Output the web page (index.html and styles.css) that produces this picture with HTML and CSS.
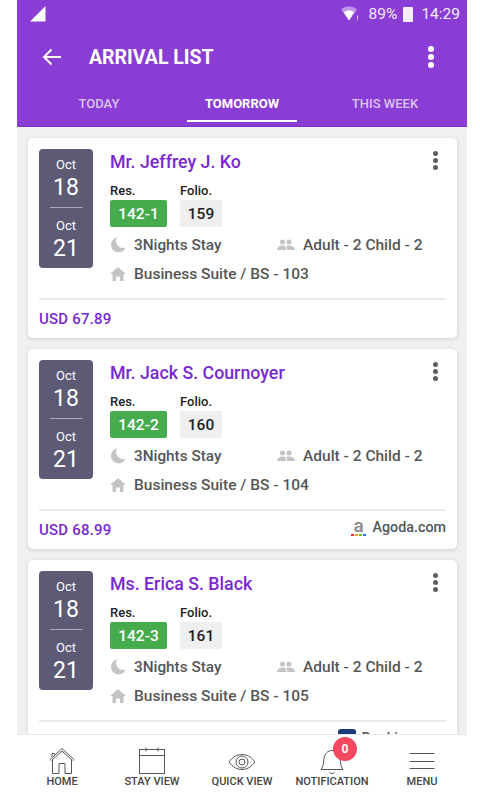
FILE: index.html
```html
<!DOCTYPE html>
<html lang="en">
<head>
<meta charset="utf-8">
<title>Arrival List</title>
<link rel="stylesheet" href="styles.css">
</head>
<body>
<div class="phone">
  <header class="appbar">
    <div class="status">
      <svg class="signal" width="16" height="16" viewBox="0 0 16 16"><path d="M0 15.500L15.500 0V15.500Z" fill="#fff"/></svg>
      <div class="status-right">
        <svg class="wifi" width="18" height="16" viewBox="0 0 18 16"><path d="M0 3.500C2 1.500 5 .5 8 .5s6 1 8 3l-8 11z" fill="#fff" opacity=".45"/><path d="M2.800 6.300C4.300 5.200 6 4.600 8 4.600s3.700.6 5.200 1.700L8 14.500z" fill="#fff"/><path d="M16 9.500h1v3h-1zM16 13.500h1v1h-1z" fill="#fff" opacity=".8"/></svg>
        <span class="pct">89%</span>
        <span class="battery"></span>
        <span class="time">14:29</span>
      </div>
    </div>
    <div class="titlebar">
      <svg class="back" width="20" height="18" viewBox="0 0 20 18"><path d="M19 9H2M9.500 1.500L2 9l7.500 7.500" fill="none" stroke="#fff" stroke-width="2"/></svg>
      <h1>ARRIVAL LIST</h1>
      <span class="kebab-big"><i></i><i></i><i></i></span>
    </div>
    <nav class="tabs">
      <div class="tab">TODAY</div>
      <div class="tab active">TOMORROW</div>
      <div class="tab">THIS WEEK</div>
    </nav>
  </header>

  <main class="list">
    <article class="card">
      <div class="card-body">
        <div class="dates">
          <span class="mon">Oct</span><span class="day">18</span>
          <span class="rule"></span>
          <span class="mon">Oct</span><span class="day">21</span>
        </div>
        <div class="info">
          <div class="name-row"><h2>Mr. Jeffrey J. Ko</h2><span class="kebab"><i></i><i></i><i></i></span></div>
          <div class="ids">
            <div class="id res"><label>Res.</label><b>142-1</b></div>
            <div class="id folio"><label>Folio.</label><b>159</b></div>
          </div>
          <div class="line">
            <div class="stay"><svg class="ic" width="16" height="16" viewBox="0 0 16 16"><use href="#moon"/></svg>3Nights Stay</div>
            <div class="guests"><svg class="ic" width="18" height="12" viewBox="0 0 18 12"><use href="#people"/></svg>Adult - 2 Child - 2</div>
          </div>
          <div class="line room"><svg class="ic" width="16" height="14" viewBox="0 0 16 14"><use href="#house"/></svg>Business Suite / BS - 103</div>
        </div>
      </div>
      <div class="card-foot"><span class="price">USD 67.89</span></div>
    </article>

    <article class="card">
      <div class="card-body">
        <div class="dates">
          <span class="mon">Oct</span><span class="day">18</span>
          <span class="rule"></span>
          <span class="mon">Oct</span><span class="day">21</span>
        </div>
        <div class="info">
          <div class="name-row"><h2>Mr. Jack S. Cournoyer</h2><span class="kebab"><i></i><i></i><i></i></span></div>
          <div class="ids">
            <div class="id res"><label>Res.</label><b>142-2</b></div>
            <div class="id folio"><label>Folio.</label><b>160</b></div>
          </div>
          <div class="line">
            <div class="stay"><svg class="ic" width="16" height="16" viewBox="0 0 16 16"><use href="#moon"/></svg>3Nights Stay</div>
            <div class="guests"><svg class="ic" width="18" height="12" viewBox="0 0 18 12"><use href="#people"/></svg>Adult - 2 Child - 2</div>
          </div>
          <div class="line room"><svg class="ic" width="16" height="14" viewBox="0 0 16 14"><use href="#house"/></svg>Business Suite / BS - 104</div>
        </div>
      </div>
      <div class="card-foot"><span class="price">USD 68.99</span>
        <span class="source"><span class="agoda">a<span class="dots"><i class="d1"></i><i class="d2"></i><i class="d3"></i><i class="d4"></i></span></span>Agoda.com</span>
      </div>
    </article>

    <article class="card">
      <div class="card-body">
        <div class="dates">
          <span class="mon">Oct</span><span class="day">18</span>
          <span class="rule"></span>
          <span class="mon">Oct</span><span class="day">21</span>
        </div>
        <div class="info">
          <div class="name-row"><h2>Ms. Erica S. Black</h2><span class="kebab"><i></i><i></i><i></i></span></div>
          <div class="ids">
            <div class="id res"><label>Res.</label><b>142-3</b></div>
            <div class="id folio"><label>Folio.</label><b>161</b></div>
          </div>
          <div class="line">
            <div class="stay"><svg class="ic" width="16" height="16" viewBox="0 0 16 16"><use href="#moon"/></svg>3Nights Stay</div>
            <div class="guests"><svg class="ic" width="18" height="12" viewBox="0 0 18 12"><use href="#people"/></svg>Adult - 2 Child - 2</div>
          </div>
          <div class="line room"><svg class="ic" width="16" height="14" viewBox="0 0 16 14"><use href="#house"/></svg>Business Suite / BS - 105</div>
        </div>
      </div>
      <div class="card-foot"><span class="price">USD 70.00</span>
        <span class="source"><span class="bk"></span>Booking.com</span>
      </div>
    </article>
  </main>

  <footer class="bottom">
    <div class="nav-item">
      <svg width="28" height="28" viewBox="0 0 28 28" fill="none" stroke="#555" stroke-width="1"><path d="M1.500 13L14 1.500 26.500 13M3.500 13.500L14 4l10.500 9.500M4 6.500V9.800M4 6.500H6.500V7.500M4.500 12.500V26.500H11V16.500H17V26.500H23.500V12.500"/></svg>
      <span>HOME</span>
    </div>
    <div class="nav-item">
      <svg width="28" height="28" viewBox="0 0 28 28" fill="none" stroke="#555" stroke-width="1"><rect x="1.500" y="2.500" width="25" height="24"/><path d="M1.500 8.500H26.500M8 .5V4.500M20 .5V4.500"/></svg>
      <span>STAY VIEW</span>
    </div>
    <div class="nav-item">
      <svg width="28" height="28" viewBox="0 0 28 28" fill="none" stroke="#555" stroke-width="1"><path d="M1 15C5 9.500 9.500 7.500 14 7.500s9 2 13 7.500c-4 5.500-8.500 7.500-13 7.500S5 20.500 1 15z"/><circle cx="14" cy="15" r="6"/><circle cx="14" cy="15" r="3"/></svg>
      <span>QUICK VIEW</span>
    </div>
    <div class="nav-item">
      <svg width="28" height="28" viewBox="0 0 28 28" fill="none" stroke="#555" stroke-width="1"><path d="M3 22.500H25C22.500 19 22.500 16 22 11.500 21.500 6.500 18 3.500 14 3.500S6.500 6.500 6 11.500C5.500 16 5.500 19 3 22.500zM11.500 25.500C12.500 26.800 15.500 26.800 16.500 25.500"/></svg>
      <span>NOTIFICATION</span>
      <em class="badge">0</em>
    </div>
    <div class="nav-item">
      <svg width="28" height="28" viewBox="0 0 28 28" fill="none" stroke="#555" stroke-width="1"><path d="M1.500 6.500H26.500M1.500 14.500H26.500M1.500 21.500H26.500"/></svg>
      <span>MENU</span>
    </div>
  </footer>
</div>

<svg class="defs" width="0" height="0" aria-hidden="true">
  <defs>
    <path id="moon" d="M7 .5A7.500 7.500 0 1 0 15.500 10.500 7 7 0 0 1 7 .5z" fill="#c4c4c4"/>
    <g id="people" fill="#c4c4c4"><circle cx="5.500" cy="3" r="2.500"/><circle cx="12" cy="3" r="2.500"/><path d="M0 11C0 8 3 6.500 5.500 6.500S9 7.500 9 11zM10 11C10 9 9.700 8 9.200 7.200 10 6.700 11 6.500 12 6.500c3 0 6 1.500 6 4.500z"/></g>
    <path id="house" d="M8 0L16 7H13.500V14H10V9.500H6V14H2.500V7H0z" fill="#c4c4c4"/>
  </defs>
</svg>
</body>
</html>
```

FILE: styles.css
```css
* { box-sizing: border-box; }
html, body { margin: 0; padding: 0; background: #fff; }
body { font-family: Roboto, "Liberation Sans", sans-serif; }
.defs { position: absolute; }
.phone {
  width: 450px; height: 800px; margin-left: 17px;
  display: flex; flex-direction: column; overflow: hidden;
  background: #f0f0f2; position: relative;
}
.appbar { background: #8a3dd4; color: #fff; height: 127px; flex: none; border-bottom: 1px solid #7d33c9; }
.status { height: 28px; display: flex; justify-content: space-between; align-items: center; padding: 0 7px 0 13px; }
.status-right { display: flex; align-items: center; font-size: 15.500px; color: #f4eefb; }
.wifi { margin-right: 10px; }
.pct { margin-right: 6px; }
.battery { width: 10px; height: 15px; background: #f4eefb; margin-right: 8px; position: relative; border-radius: 1px; }
.titlebar { height: 58px; display: flex; align-items: center; padding: 0 33px 0 25px; }
.back { flex: none; }
.titlebar h1 { margin: 0 0 0 27px; font-size: 19.500px; font-weight: 700; flex: 1; }
.kebab-big { display: flex; flex-direction: column; gap: 2px; }
.kebab-big i { width: 6px; height: 6px; border-radius: 50%; background: #fff; }
.tabs { display: grid; grid-template-columns: repeat(3, 143px); justify-content: center; height: 40px; }
.tab { position: relative; text-align: center; font-size: 13px; font-weight: 500; color: #dcc6f2; padding-top: 10px; }
.tab.active { color: #fff; font-weight: 700; }
.tab.active::after { content: ""; position: absolute; left: 16.500px; right: 16.500px; bottom: 4px; height: 2px; background: #fff; }

.list { flex: 1; min-height: 0; overflow: hidden; padding: 11px 10px 0 11px; display: flex; flex-direction: column; gap: 11px; }
.card {
  background: #fff; border-radius: 5px; height: 200px; flex: none;
  box-shadow: 0 1px 4px rgba(0,0,0,.14);
  padding: 11px 11px 0;
}
.card-body { display: flex; height: 151px; border-bottom: 2px solid #ececec; }
.dates {
  width: 54px; height: 119px; flex: none; background: #5c5a74; border-radius: 4px;
  color: #fff; display: flex; flex-direction: column; align-items: center; padding-top: 8px;
}
.mon { font-size: 13px; line-height: 16px; }
.day { font-size: 23px; line-height: 26px; margin-top: 2px; font-weight: 400; }
.rule { width: 33px; height: 1px; background: #a9a8b8; margin: 6px 0 10px; }
.info { flex: 1; padding-left: 17px; min-width: 0; }
.name-row { display: flex; justify-content: space-between; align-items: flex-start; height: 28px; padding-top: 1px; }
h2 { margin: 0; font-size: 17.800px; line-height: 24px; font-weight: 500; color: #7a28d0; }
.kebab { display: flex; flex-direction: column; gap: 2px; margin: 1px 8px 0 0; }
.kebab i { width: 5px; height: 5px; border-radius: 50%; background: #5f5f5f; }
.ids { display: flex; gap: 13px; margin-top: 6px; }
.id label { display: block; font-size: 13px; font-weight: 500; line-height: 15px; color: #222; margin-bottom: 2px; }
.id b { display: flex; align-items: center; justify-content: center; height: 27px; border-radius: 2px; font-size: 15.500px; font-weight: 500; }
.res b { width: 57px; background: #46ab4d; color: #fff; }
.folio b { width: 42px; background: #efefef; color: #222; }
.line { display: flex; align-items: center; font-size: 15.300px; font-weight: 500; color: #565656; height: 29px; }
.room { font-size: 15.500px; }
.ids + .line { margin-top: 3px; }
.stay { display: flex; align-items: center; width: 167px; }
.guests { display: flex; align-items: center; font-size: 15.500px; }
.ic { flex: none; margin-right: 8px; }
.card-foot { display: flex; justify-content: space-between; align-items: center; height: 34px; }
.price { font-size: 15px; font-weight: 500; color: #7a28d0; letter-spacing: .2px; padding-top: 3px; }
.source { display: flex; align-items: center; font-size: 14.300px; font-weight: 500; color: #565656; padding-bottom: 2px; }
.agoda { position: relative; width: 16px; margin-right: 6px; font-size: 19px; line-height: 14px; height: 17px; color: #888; text-align: center; }
.dots { position: absolute; left: 0; bottom: 0; display: flex; gap: 1px; }
.dots i { width: 3px; height: 2px; }
.d1 { background: #e5333f; } .d2 { background: #f2a01f; } .d3 { background: #6cbb3c; } .d4 { background: #2e6fd8; }
.bk { width: 18px; height: 18px; background: #1a3a7a; border-radius: 3px; margin-right: 6px; }

.bottom {
  position: absolute; left: -17px; right: -13px; bottom: 0; height: 66px;
  background: #fff; display: flex; padding-left: 17px; border-top: 1px solid #e8e8e8;
}
.nav-item { position: relative; width: 90px; display: flex; flex-direction: column; align-items: center; padding-top: 12px; }
.nav-item span { font-size: 11px; font-weight: 500; line-height: 13px; color: #444; white-space: nowrap; }
.badge {
  position: absolute; left: 46px; top: 2px; width: 24px; height: 24px; border-radius: 50%;
  background: #f2495e; color: #fff; font-size: 12px; font-style: normal; font-weight: 700;
  display: flex; align-items: center; justify-content: center;
}
```
